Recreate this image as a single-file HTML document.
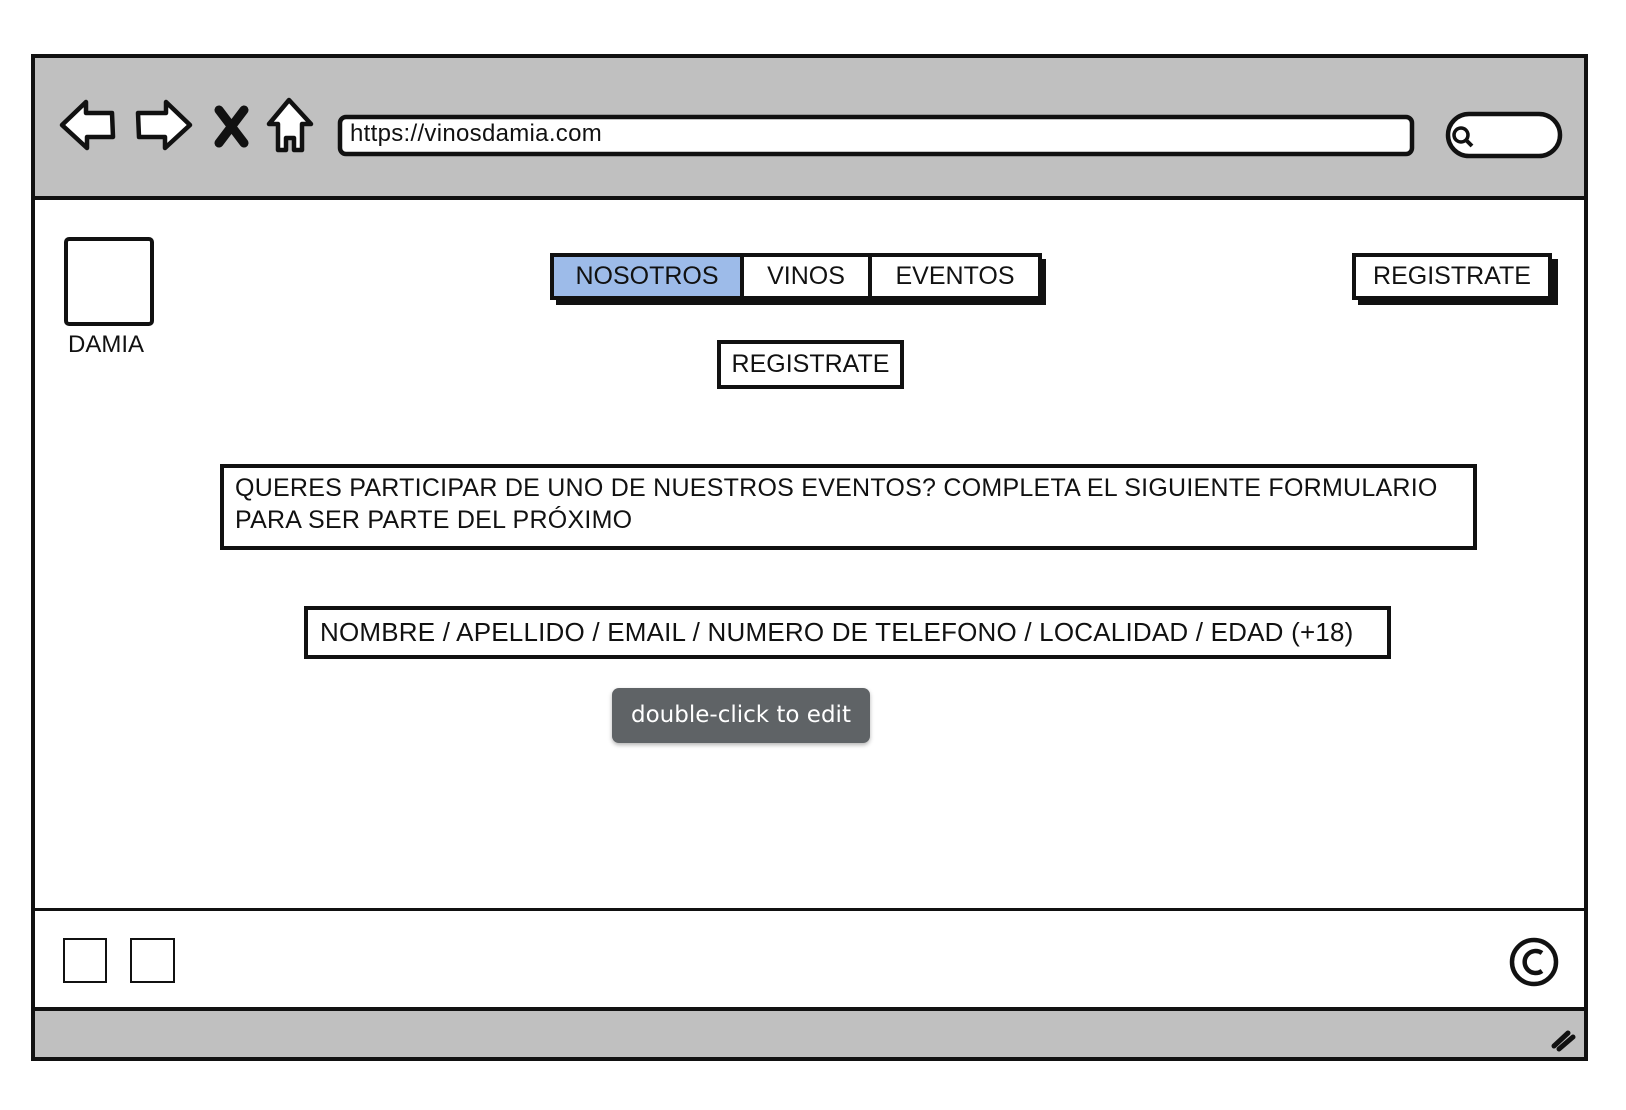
<!DOCTYPE html>
<html><head><meta charset="utf-8"><style>
*{margin:0;padding:0;box-sizing:border-box}
body{width:1626px;height:1110px;background:#fff;position:relative;overflow:hidden;font-family:"Liberation Sans",sans-serif;color:#111}
.a{position:absolute}
.box{position:absolute;border:4px solid #111;background:#fff}
.t{position:absolute;font-size:25px;white-space:nowrap}
</style></head><body>
<div class="a" style="left:31px;top:54px;width:1557px;height:1007px;border:4px solid #111;background:#fff"></div>
<div class="a" style="left:35px;top:58px;width:1549px;height:142px;background:#c0c0c0;border-bottom:4px solid #111"></div>
<div class="a" style="left:35px;top:908px;width:1553px;height:3px;background:#111"></div>
<div class="a" style="left:35px;top:1007px;width:1549px;height:50px;background:#c0c0c0;border-top:4px solid #111"></div>
<svg class="a" style="left:0;top:0" width="1626" height="200">
<g fill="#fff" stroke="#111" stroke-width="4.5" stroke-linejoin="round">
<path d="M62 125 L86 102 L86 113 L112 113 L113 137 L87 137 L87 148 Z"/>
<path d="M190 125 L166 102 L166 113 L138 113 L139 137 L165 137 L165 148 Z"/>
<path d="M289 100 L269 124 L278 124 L278 150 L286 150 L286 138 L294 138 L294 150 L302 150 L302 124 L311 124 Z"/>
</g>
<path d="M219 110 L244 143 M244 110 L219 143" stroke="#111" stroke-width="9" stroke-linecap="round"/>
<rect x="340" y="117" width="1072" height="37" rx="6" fill="#fff" stroke="#111" stroke-width="4.5"/>
<rect x="1348" y="114" width="112" height="42" rx="21" fill="#fff" stroke="#111" stroke-width="4.5" transform="translate(100 0)"/>
<circle cx="1461" cy="135" r="7" fill="none" stroke="#111" stroke-width="3.5"/>
<path d="M1466 140 L1472 146" stroke="#111" stroke-width="4"/>
</svg>
<div class="t" style="left:350px;top:120px;font-size:24px;letter-spacing:0.3px">https://vinosdamia.com</div>
<div class="a" style="left:64px;top:237px;width:90px;height:89px;border:4px solid #111;border-radius:5px"></div>
<div class="t" style="left:68px;top:331px;font-size:24px">DAMIA</div>
<div class="a" style="left:556px;top:259px;width:490px;height:46px;background:#111"></div>
<div class="box" style="left:550px;top:253px;width:492px;height:47px;display:flex;padding:0">
<div style="width:190px;background:#9dbbe9;border-right:4px solid #111;font-size:25px;text-align:center;line-height:39px">NOSOTROS</div>
<div style="width:128px;border-right:4px solid #111;font-size:25px;text-align:center;line-height:39px">VINOS</div>
<div style="flex:1;font-size:25px;text-align:center;line-height:39px">EVENTOS</div>
</div>
<div class="a" style="left:1358px;top:259px;width:200px;height:46px;background:#111"></div>
<div class="box" style="left:1352px;top:253px;width:200px;height:47px;font-size:25px;text-align:center;line-height:39px">REGISTRATE</div>
<div class="box" style="left:717px;top:340px;width:187px;height:49px;font-size:25px;text-align:center;line-height:41px">REGISTRATE</div>
<div class="box" style="left:220px;top:464px;width:1257px;height:86px"></div>
<div class="t" style="left:235px;top:474px;letter-spacing:0.25px">QUERES PARTICIPAR DE UNO DE NUESTROS EVENTOS? COMPLETA EL SIGUIENTE FORMULARIO</div>
<div class="t" style="left:235px;top:506px;letter-spacing:0.25px">PARA SER PARTE DEL PRÓXIMO</div>
<div class="box" style="left:304px;top:606px;width:1087px;height:53px"></div>
<div class="t" style="left:320px;top:617px;font-size:26px;letter-spacing:0.2px">NOMBRE / APELLIDO / EMAIL / NUMERO DE TELEFONO / LOCALIDAD / EDAD (+18)</div>
<div class="a" style="left:612px;top:688px;width:258px;height:55px;background:#5f6366;border-radius:7px;box-shadow:0 2px 4px rgba(0,0,0,.3);color:#fff;font-family:'DejaVu Sans',sans-serif;font-size:23px;text-align:center;line-height:55px">double-click to edit</div>
<div class="a" style="left:63px;top:938px;width:44px;height:45px;border:2px solid #111"></div>
<div class="a" style="left:130px;top:938px;width:45px;height:45px;border:2px solid #111"></div>
<svg class="a" style="left:1502px;top:926px" width="80" height="134">
<circle cx="32" cy="36" r="22" fill="none" stroke="#111" stroke-width="4.5"/>
<path d="M40 27 A11 11 0 1 0 40 45" fill="none" stroke="#111" stroke-width="4.5"/>
<path d="M52 120 L66 107 M57 123 L71 111" stroke="#111" stroke-width="5" stroke-linecap="round"/>
</svg>
</body></html>
